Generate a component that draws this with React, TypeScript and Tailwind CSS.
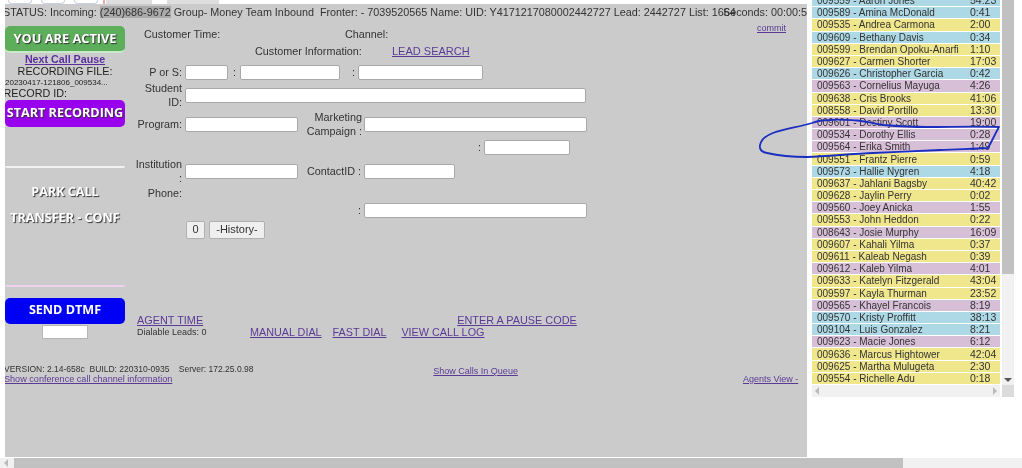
const sans = "font-['Liberation_Sans',Arial,sans-serif]";
const shadowText = "font-['Open_Sans',sans-serif] font-bold text-white [text-shadow:1px_1px_1px_#333]";

type Agent = [string, string, string, "b" | "y" | "t"];
const agents: Agent[] = [
  ["009559", "Aaron Jones", "54:23", "b"],
  ["009589", "Amina McDonald", "0:41", "b"],
  ["009535", "Andrea Carmona", "2:00", "y"],
  ["009609", "Bethany Davis", "0:34", "b"],
  ["009599", "Brendan Opoku-Anarfi", "1:10", "y"],
  ["009627", "Carmen Shorter", "17:03", "y"],
  ["009626", "Christopher Garcia", "0:42", "b"],
  ["009563", "Cornelius Mayuga", "4:26", "t"],
  ["009638", "Cris Brooks", "41:06", "y"],
  ["008558", "David Portillo", "13:30", "y"],
  ["009601", "Destiny Scott", "19:00", "t"],
  ["009534", "Dorothy Ellis", "0:28", "t"],
  ["009564", "Erika Smith", "1:49", "t"],
  ["009551", "Frantz Pierre", "0:59", "y"],
  ["009573", "Hallie Nygren", "4:18", "b"],
  ["009637", "Jahlani Bagsby", "40:42", "y"],
  ["009628", "Jaylin Perry", "0:02", "y"],
  ["009560", "Joey Anicka", "1:55", "t"],
  ["009553", "John Heddon", "0:22", "y"],
  ["008643", "Josie Murphy", "16:09", "t"],
  ["009607", "Kahali Yilma", "0:37", "y"],
  ["009611", "Kaleab Negash", "0:39", "y"],
  ["009612", "Kaleb Yilma", "4:01", "t"],
  ["009633", "Katelyn Fitzgerald", "43:04", "y"],
  ["009597", "Kayla Thurman", "23:52", "y"],
  ["009565", "Khayel Francois", "8:19", "t"],
  ["009570", "Kristy Proffitt", "38:13", "b"],
  ["009104", "Luis Gonzalez", "8:21", "b"],
  ["009623", "Macie Jones", "6:12", "t"],
  ["009636", "Marcus Hightower", "42:04", "y"],
  ["009625", "Martha Mulugeta", "2:30", "y"],
  ["009554", "Richelle Adu", "0:18", "y"],
];

const rowBg = { b: "bg-[#add8e6]", y: "bg-[#f0e68c]", t: "bg-[#d8bfd8]" };

function Field({ className }: { className: string }) {
  return <div className={`h-[15px] shrink-0 rounded-[2px] border border-[#a9a9a9] bg-white ${className}`} />;
}

function Label({ children, className = "" }: { children: React.ReactNode; className?: string }) {
  return <div className={`shrink-0 text-right leading-[14px] ${className}`}>{children}</div>;
}

function Link({ children, className = "" }: { children: React.ReactNode; className?: string }) {
  return <span className={`text-[#5b3a96] underline ${className}`}>{children}</span>;
}

function LeftColumn() {
  return (
    <div className="flex w-[120px] shrink-0 flex-col items-center text-[10.8px] text-[#222]">
      <div className={`mt-[6px] flex h-[27px] w-[120px] items-center justify-center rounded-[5px] border-b-2 border-[#c8eac8] bg-[#5cae5a] text-[12.8px] ${shadowText}`}>
        YOU ARE ACTIVE
      </div>
      <div className="h-[12px] text-[10.7px] font-bold leading-[12px] text-[#5b2fa0] underline">Next Call Pause</div>
      <div className="h-[12px] leading-[12px]">RECORDING FILE:</div>
      <div className="h-[10px] w-full whitespace-nowrap text-[8px] leading-[11px]">20230417-121806_009534...</div>
      <div className="-ml-[3px] h-[12px] w-full leading-[13px]">RECORD ID:</div>
      <div className={`mt-[1px] flex h-[27px] w-[120px] items-start justify-center rounded-[5px] bg-[#9900ee] pt-[4px] text-[12.6px] leading-[18px] ${shadowText}`}>
        START RECORDING
      </div>
      <div className="mt-[39px] h-[2px] w-[120px] rounded-b-[3px] bg-[#f2f2f2]" />
      <div className={`mt-[16px] text-[12.6px] leading-[16px] ${shadowText}`}>PARK CALL</div>
      <div className={`mt-[10px] whitespace-nowrap text-[12.6px] leading-[16px] ${shadowText}`}>TRANSFER - CONF</div>
      <div className="mt-[59px] h-[2px] w-[120px] rounded-b-[3px] bg-[#efd0ef]" />
      <div className="mt-[11px] flex h-[26px] w-[120px] items-start justify-center rounded-[5px] bg-[#0000f5] pt-[3px] font-['Open_Sans',sans-serif] text-[12.6px] font-bold leading-[18px] text-white">
        SEND DTMF
      </div>
      <div className="mt-[1px] h-[14px] w-[46px] border border-[#b5b5b5] bg-white" />
    </div>
  );
}

function Form() {
  return (
    <div className="relative min-w-0 flex-1 text-[10.8px] text-[#333]">
      <div className="mt-[7px] flex h-[14px] leading-[14px]">
        <span className="ml-[19px] w-[201px]">Customer Time:</span>
        <span>Channel:</span>
      </div>
      <div className="mt-[3px] flex h-[14px] leading-[14px]">
        <span className="ml-[130px] w-[137px]">Customer Information:</span>
        <Link className="text-[11px]">LEAD SEARCH</Link>
      </div>
      <div className="mt-[6px] flex items-center">
        <Label className="w-[57px]">P or S:</Label>
        <Field className="ml-[3px] w-[43px]" />
        <span className="ml-[5px] w-[7px]">:</span>
        <Field className="w-[100px]" />
        <span className="ml-[12px] w-[6px]">:</span>
        <Field className="w-[125px]" />
      </div>
      <div className="mt-[1px] flex items-center">
        <Label className="w-[57px]">Student<br />ID:</Label>
        <Field className="ml-[3px] w-[401px]" />
      </div>
      <div className="mt-[1px] flex items-center">
        <Label className="w-[57px]">Program:</Label>
        <Field className="ml-[3px] w-[113px]" />
        <Label className="w-[64px]">Marketing<br />Campaign :</Label>
        <Field className="ml-[2px] w-[223px]" />
      </div>
      <div className="mt-[1px] flex items-center">
        <span className="ml-[353px] w-[6px]">:</span>
        <Field className="w-[86px]" />
      </div>
      <div className="mt-[2px] flex items-center">
        <Label className="w-[57px]">Institution<br />:</Label>
        <Field className="ml-[3px] w-[113px]" />
        <Label className="ml-[8px] w-[55px] whitespace-nowrap">ContactID :</Label>
        <Field className="ml-[3px] w-[91px]" />
      </div>
      <Label className="mt-[1px] w-[57px]">Phone:</Label>
      <div className="mt-[2px] flex items-center">
        <span className="ml-[233px] w-[6px]">:</span>
        <Field className="w-[223px]" />
      </div>
      <div className="mt-[2px] flex gap-[4px] pl-[61px]">
        <div className="flex h-[18px] w-[19px] items-center justify-center rounded-[2px] border border-[#b0b0b0] bg-[#efefef] text-[11px]">0</div>
        <div className="flex h-[18px] w-[56px] items-center justify-center rounded-[2px] border border-[#b0b0b0] bg-[#efefef] text-[11px]">-History-</div>
      </div>
      <div className="mt-[75px] flex h-[12px] items-end leading-[12px]">
        <Link className="ml-[12px] text-[10.9px]">AGENT TIME</Link>
        <Link className="ml-[254px] text-[10.9px]">ENTER A PAUSE CODE</Link>
      </div>
      <div className="flex h-[13px] items-center leading-[13px]">
        <span className="ml-[12px] w-[113px] text-[9px]">Dialable Leads: 0</span>
        <Link>MANUAL DIAL</Link>
        <Link className="ml-[11px]">FAST DIAL</Link>
        <Link className="ml-[15px]">VIEW CALL LOG</Link>
      </div>
    </div>
  );
}

function AgentsPanel() {
  return (
    <div className="relative h-full w-[215px] shrink-0 overflow-hidden bg-white">
      <div className="ml-[5px] flex h-[397px] w-[207px] flex-col">
        <div className="flex min-h-0 flex-1 overflow-hidden">
          <div className={`-mt-[5px] w-[188px] shrink-0 ${sans} text-[10px] text-[#333]`}>
            {agents.map(([id, name, time, color]) => (
              <div key={id} className={`mb-[1px] flex h-[11.2px] items-center whitespace-nowrap leading-[11px] ${rowBg[color]}`}>
                <span className="ml-[5px] w-[153px]">{id} - {name}</span>
                <span className="text-[10.5px]">{time}</span>
              </div>
            ))}
          </div>
          <div className="relative ml-[2px] w-[12px] bg-[#f1f1f1]">
            <div className="h-[274px] w-full bg-[#c1c1c1]" />
            <svg className="absolute bottom-[2px] left-[2px]" width="8" height="6" viewBox="0 0 8 6">
              <path d="M0 1h8L4 5z" fill="#555" />
            </svg>
          </div>
        </div>
        <div className="flex h-[12px] shrink-0">
          <div className="flex w-[188px] items-center justify-between bg-[#f1f1f1] px-[2px]">
            <svg width="6" height="8" viewBox="0 0 6 8"><path d="M5 0v8L1 4z" fill="#bbb" /></svg>
            <svg width="6" height="8" viewBox="0 0 6 8"><path d="M1 0v8l4-4z" fill="#bbb" /></svg>
          </div>
          <div className="ml-[2px] w-[12px] bg-[#dcdcdc]" />
        </div>
      </div>
    </div>
  );
}

export default function App() {
  return (
    <div className={`relative flex h-[468px] w-[1022px] flex-col overflow-hidden bg-white ${sans} blur-[0.35px]`}>
      <div className="flex min-h-0 flex-1">
        <div className="flex min-w-0 flex-1 flex-col">
          {/* strip of the browser page cut off at the top */}
          <div className="flex h-[4px] shrink-0 items-end pl-[8px]">
            <div className="h-[4px] w-[24px] rounded-b-full border border-t-0 border-[#c9d3e6] bg-white" />
            <div className="ml-[9px] h-[4px] w-[24px] rounded-b-full border border-t-0 border-[#c9d3e6] bg-white" />
            <div className="ml-[9px] h-[4px] w-[24px] rounded-b-full border border-t-0 border-[#c9d3e6] bg-white" />
            <div className="ml-[5px] h-[4px] w-[2px] bg-[#e9a7a7]" />
            <div className="ml-[1px] h-[4px] w-[46px] bg-[#dedede]" />
            <div className="ml-[15px] h-[4px] w-[52px] bg-[#dedede]" />
          </div>
          <div className="flex min-h-0 flex-1">
            <div className="w-[5px] shrink-0" />
            <div className="relative min-w-0 flex-1 overflow-hidden bg-[#cbcbcb]">
              <div className="-ml-[2px] h-[16px] whitespace-nowrap pt-[1px] text-[10.8px] leading-[15px] text-[#333]">
                STATUS: Incoming: <span className="bg-[#aaaaaa]">(240)686-9672</span> Group- Money Team Inbound&nbsp; Fronter: - 7039520565 Name: UID: Y4171217080002442727 Lead: 2442727 List: 1664
              </div>
              <div className="absolute left-[718px] top-[1px] whitespace-nowrap text-[10.8px] leading-[15px] text-[#333]">Seconds: 00:00:50</div>
              <Link className="absolute left-[752px] top-[18px] text-[9px] leading-[12px]">commit</Link>
              <div className="flex">
                <LeftColumn />
                <Form />
              </div>
              <div className="mt-[26px] h-[9px] whitespace-nowrap text-[8.5px] leading-[9px] text-[#333]">
                <span className="-ml-[1px]">VERSION: 2.14-658c&nbsp; BUILD: 220310-0935 &nbsp; &nbsp;Server: 172.25.0.98</span>
              </div>
              <div className="flex h-[11px] items-center whitespace-nowrap text-[9px] leading-[11px]">
                <Link className="-ml-[1px] text-[9.1px]">Show conference call channel information</Link>
                <Link className="-mt-[17px] ml-[261px]">Show Calls In Queue</Link>
                <Link className="ml-[225px]">Agents View -</Link>
              </div>
            </div>
          </div>
        </div>
        <AgentsPanel />
      </div>
      <div className="mt-[1px] flex h-[10px] shrink-0 items-center bg-[#f1f1f1]">
        <svg className="ml-[3px] w-[6px] shrink-0" height="8" viewBox="0 0 6 8"><path d="M5 0v8L1 4z" fill="#bbb" /></svg>
        <div className="ml-[5px] h-full w-[889px] bg-[#c1c1c1]" />
      </div>
      {/* hand-drawn annotation over the list */}
      <svg className="pointer-events-none absolute left-0 top-0" width="1022" height="468" viewBox="0 0 1022 468" fill="none">
        <path
          d="M999 127 C975 126 950 127 927 127 C910 127 895 126 883 125 C870 123 865 121 857 120.5 C848 120 838 119 830 120 C822 120 817 121 812 123 C798 127 785 129 773 133 C765 136 761 140 760 145 C759 150 762 152 767 153 C780 156 795 157 807 157 C830 156 850 154 873 153 C895 152 920 151 940 150 C960 149 975 149 988 148 C992 141 995 134 999 127"
          stroke="#1a2fc0"
          strokeWidth="1.8"
          strokeLinecap="round"
        />
      </svg>
    </div>
  );
}
